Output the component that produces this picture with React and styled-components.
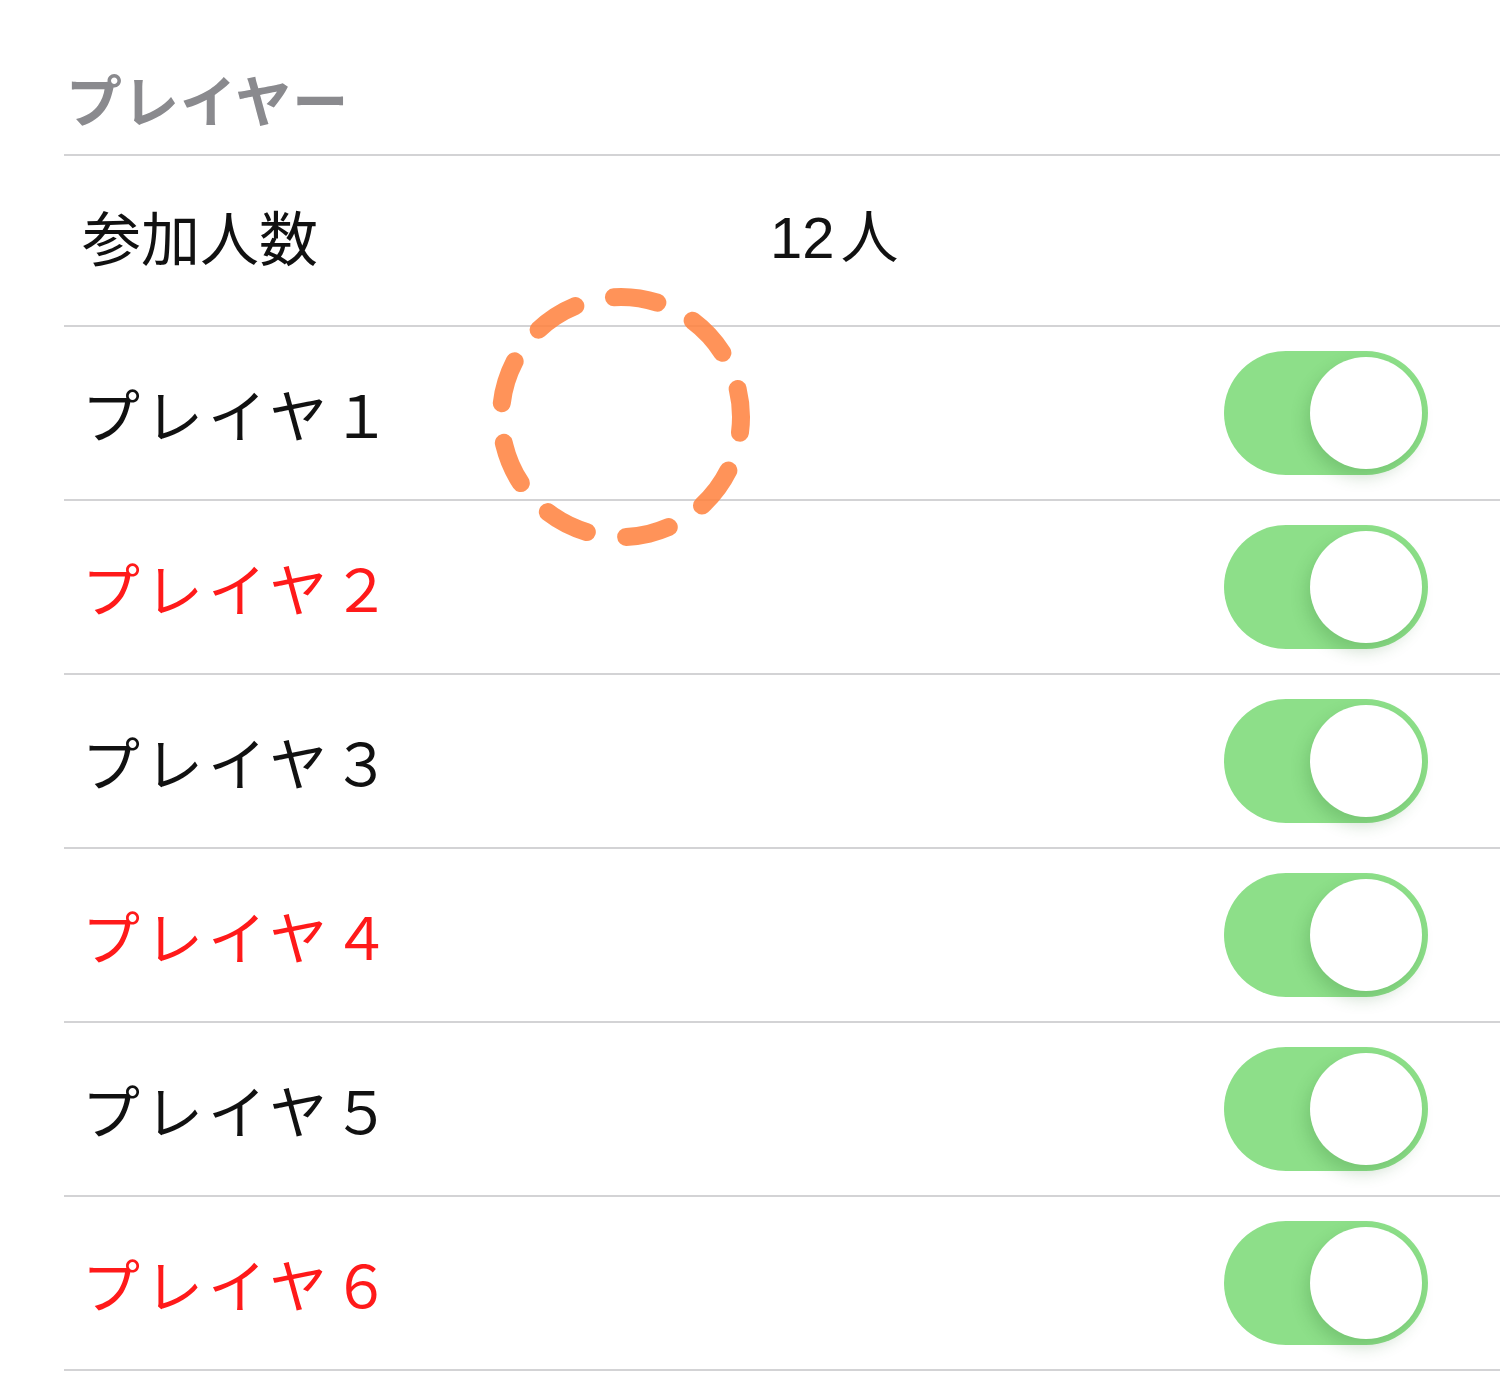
import React from "react";
import styled, { createGlobalStyle } from "styled-components";

const Global = createGlobalStyle`
  body {
    margin: 0;
    background: #ffffff;
    font-family: "Noto Sans CJK JP", "Liberation Sans", sans-serif;
  }
`;

const Page = styled.div`
  position: relative;
  width: 1500px;
  height: 1384px;
  overflow: hidden;
  background: #fff;
`;

const SectionTitle = styled.div`
  height: 154px;
  padding: 42px 0 0 66px;
  box-sizing: border-box;
  display: flex;
  align-items: center;
  font-size: 56px;
  font-weight: 700;
  color: #8a8a8e;
  letter-spacing: 1px;
  line-height: 1;
`;

const List = styled.div`
  margin-left: 64px;
  border-top: 2px solid #d3d3d5;
`;

const Row = styled.div`
  display: flex;
  align-items: center;
  box-sizing: border-box;
  height: ${(p) => (p.$compact ? 171 : 174)}px;
  padding: 0 72px ${(p) => (p.$compact ? 10 : 0)}px 18px;
  border-bottom: 2px solid #d3d3d5;
`;

const Label = styled.div`
  width: ${(p) => (p.$wide ? "688px" : "auto")};
  flex: ${(p) => (p.$wide ? "0 0 auto" : "1")};
  font-size: ${(p) => (p.$wide ? 59 : 58)}px;
  letter-spacing: ${(p) => (p.$wide ? 0 : 5)}px;
  line-height: 1;
  color: ${(p) => (p.$red ? "#ff1a1a" : "#111111")};
`;

const Value = styled.div`
  font-size: 58px;
  line-height: 1;
  color: #111;
  font-family: "Liberation Sans", "Noto Sans CJK JP", sans-serif;

  span {
    font-family: "Noto Sans CJK JP", sans-serif;
    margin-left: 6px;
  }
`;

const Track = styled.div`
  position: relative;
  width: 204px;
  height: 124px;
  border-radius: 62px;
  background: #8ddf89;
  flex: 0 0 auto;
`;

const Knob = styled.div`
  position: absolute;
  top: 6px;
  right: 6px;
  width: 112px;
  height: 112px;
  border-radius: 50%;
  background: #fff;
  box-shadow: -4px 8px 16px rgba(40, 110, 40, 0.22);
`;

const Marker = styled.svg`
  position: absolute;
  left: 483px;
  top: 279px;
  pointer-events: none;
`;

const Switch = () => (
  <Track>
    <Knob />
  </Track>
);

const players = ["１", "２", "３", "４", "５", "６"];

export default function App() {
  return (
    <Page>
      <Global />
      <SectionTitle>プレイヤー</SectionTitle>
      <List>
        <Row $compact>
          <Label $wide>参加人数</Label>
          <Value>
            12<span>人</span>
          </Value>
        </Row>
        {players.map((n, i) => (
          <Row key={n}>
            <Label $red={i % 2 === 1}>プレイヤ{n}</Label>
            <Switch />
          </Row>
        ))}
      </List>
      <Marker width="276" height="276" viewBox="0 0 276 276">
        <circle
          cx="138"
          cy="138"
          r="120"
          fill="none"
          stroke="rgba(255, 128, 60, 0.85)"
          strokeWidth="18"
          strokeLinecap="round"
          strokeDasharray="44 39.78"
          transform="rotate(-13.5 138 138)"
        />
      </Marker>
    </Page>
  );
}
